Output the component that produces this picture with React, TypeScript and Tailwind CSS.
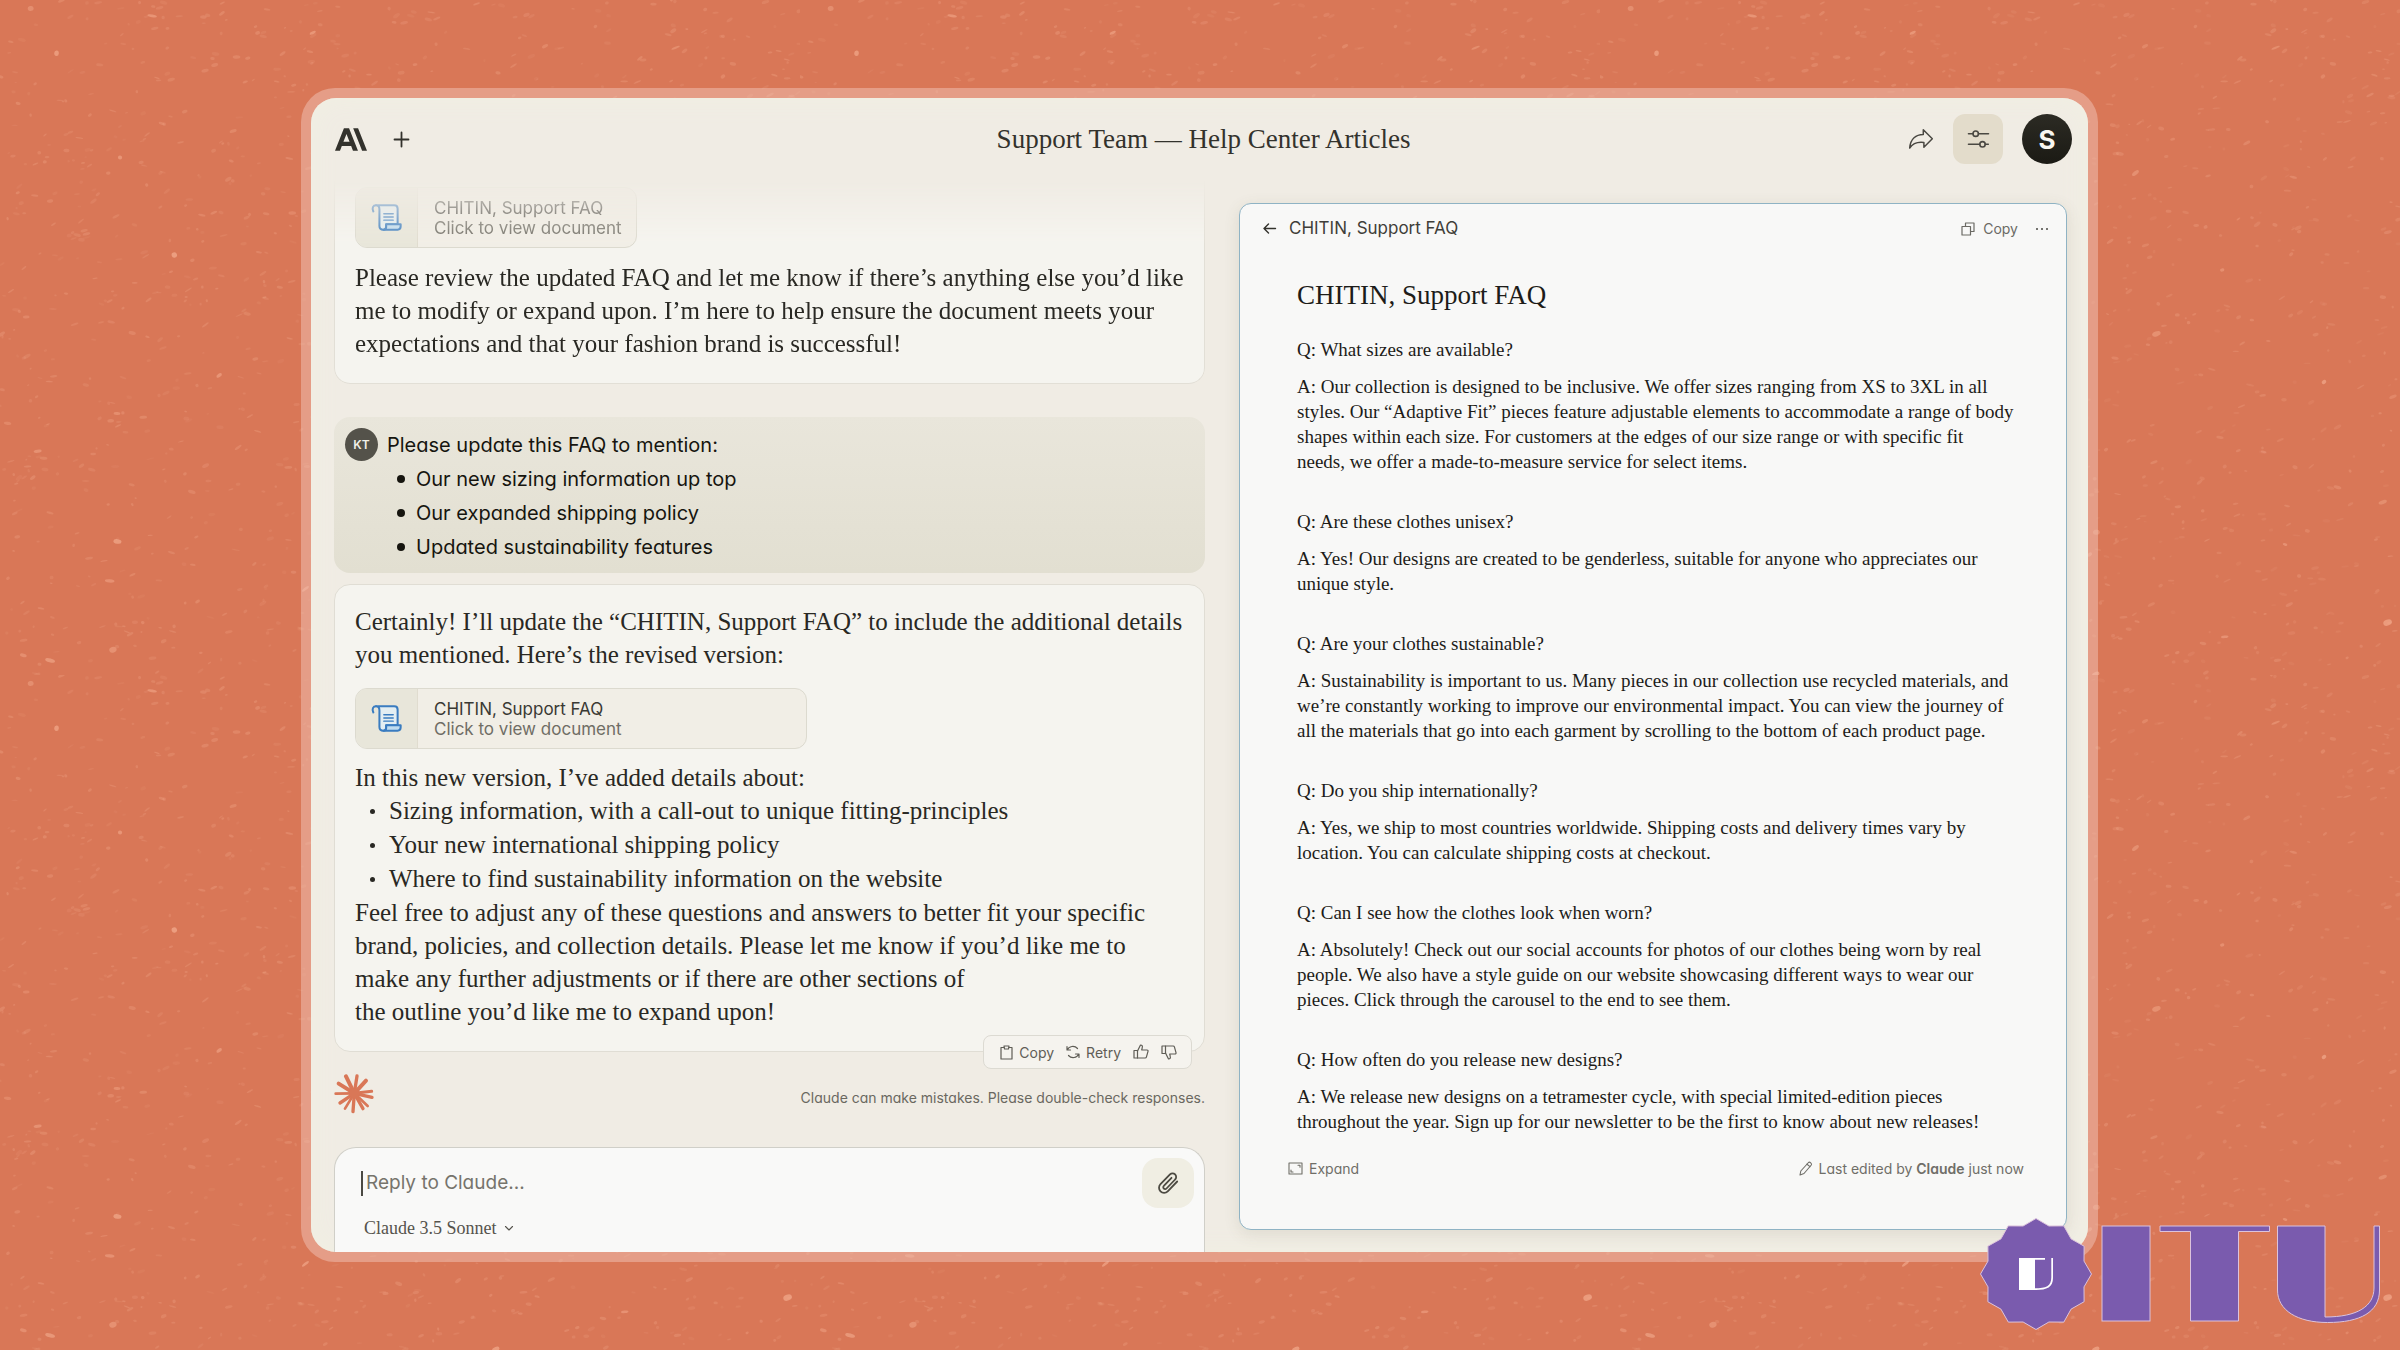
import type { ReactNode } from "react";

const SANS = "font-[Inter,sans-serif] [font-feature-settings:'cv11']";
const SERIF = "font-['Liberation_Serif',serif]";

/* ---------- backdrop ---------- */

function seeded(seed: number) {
  let s = seed;
  return () => {
    s = (s * 1103515245 + 12345) % 2147483648;
    return s / 2147483648;
  };
}

const rand = seeded(42);
const SPECKS = Array.from({ length: 1300 }, () => {
  const big = rand() > 0.965;
  return {
    x: rand() * 800,
    y: rand() * 675,
    rx: big ? 2 + rand() * 3 : 1 + rand() * 3,
    ry: big ? 1 + rand() * 2 : 0.6 + rand() * 1.2,
    o: big ? 0.4 + rand() * 0.35 : 0.08 + rand() * 0.24,
    a: -40 + rand() * 60,
  };
});

function Speckles() {
  return (
    <svg className="absolute inset-0 h-full w-full" aria-hidden="true">
      <defs>
        <pattern id="specks" width="800" height="675" patternUnits="userSpaceOnUse">
          {SPECKS.map((s, i) => (
            <ellipse
              key={i}
              cx={s.x}
              cy={s.y}
              rx={s.rx}
              ry={s.ry}
              fill="#f3ab8d"
              opacity={s.o}
              transform={`rotate(${s.a} ${s.x} ${s.y})`}
            />
          ))}
        </pattern>
      </defs>
      <rect width="100%" height="100%" fill="url(#specks)" />
    </svg>
  );
}

/* ---------- icons ---------- */

function Stroke({
  className,
  viewBox,
  width = 1,
  children,
}: {
  className: string;
  viewBox: string;
  width?: number;
  children: ReactNode;
}) {
  return (
    <svg
      className={`shrink-0 overflow-visible ${className}`}
      viewBox={viewBox}
      fill="none"
      stroke="currentColor"
      strokeWidth={width}
      strokeLinecap="round"
      strokeLinejoin="round"
      aria-hidden="true"
    >
      {children}
    </svg>
  );
}

const AnthropicMark = () => (
  <svg className="h-[23px] w-8" viewBox="0 3.54 24 16.92" fill="#33322c" role="img" aria-label="Anthropic">
    <path d="M17.304 3.541h-3.672l6.696 16.918H24Zm-10.608 0L0 20.459h3.744l1.37-3.553h7.005l1.369 3.553h3.744L10.536 3.541Zm-.371 10.223 2.291-5.946 2.292 5.946Z" />
  </svg>
);

const ShareIcon = () => (
  <Stroke className="h-5 w-6" viewBox="0 0 24 20" width={1.5}>
    <path d="M.7 19C1.5 10 7 5.6 14.3 5.5V.8l9 9-8.4 8.4v-4.8C8.800 12.600 4 14 .7 19Z" />
  </Stroke>
);

const SlidersIcon = () => (
  <Stroke className="h-4 w-[21px]" viewBox="0 0 21 16" width={1.6}>
    <path d="M.5 2.700h4.500M10.500 2.700h10M.5 13.300h11.300M17.300 13.300h3" />
    <circle cx="7.700" cy="2.700" r="2.700" />
    <circle cx="14.500" cy="13.300" r="2.700" />
  </Stroke>
);

const ScrollIcon = () => (
  <svg
    className="h-[27px] w-[29px] overflow-visible"
    viewBox="0 0 86 80"
    fill="none"
    stroke="#3a7cc0"
    strokeWidth="6"
    strokeLinecap="round"
    strokeLinejoin="round"
    aria-hidden="true"
  >
    <path d="M12 4H66q10 0 10 10V60H42v8q0 8-8 8-12 0-12-11V16Q22 4 12 4Z" fill="#e3eef2" />
    <path d="M4 22C-1 12 3 4 12 4" />
    <path d="M34 76q8 0 8-8v-8H85v6q0 10-9 10Z" fill="#bfdcf0" />
    <path d="M35 29H63M35 38.500H63M35 48H63" strokeWidth="4" />
  </svg>
);

const CopySquares = () => (
  <Stroke className="h-[14px] w-[14px]" viewBox="0 0 14 14" width={1.2}>
    <path d="M4.500 4V1h8.500v8.500h-3" />
    <path d="M1 4.500h8.500V13H1Z" />
  </Stroke>
);

const BackArrow = () => (
  <Stroke className="h-[11px] w-[13px]" viewBox="0 0 13 11" width={1.4}>
    <path d="M12.500 5.500H1M5.500 1 1 5.500 5.500 10" />
  </Stroke>
);

const Clipboard = () => (
  <Stroke className="h-[15px] w-[13px]" viewBox="0 0 13 15" width={1.2}>
    <path d="M4 2.500H1V14h11V2.500H9" />
    <path d="M4 1h5l-.5 3h-4Z" />
  </Stroke>
);

const RetryIcon = () => (
  <Stroke className="h-[14px] w-[14px]" viewBox="0 0 14 14" width={1.2}>
    <path d="M1 1.500v3.500h3.500M1.200 5C3 1 8.500.200 11.500 3.500" />
    <path d="M13 12.500V9H9.500M12.800 9C11 13 5.500 13.800 2.500 10.500" />
  </Stroke>
);

const ThumbUp = ({ flip = false }: { flip?: boolean }) => (
  <Stroke className={flip ? "h-4 w-4 -scale-y-100" : "h-4 w-4"} viewBox="0 0 16 16" width={1.2}>
    <path d="M1 6.500h3.500V14H1Z" />
    <path d="M4.500 7 7.500 1c1.800 0 2.200 1.200 1.700 2.800L8.700 6H14c.8 0 1.200.6 1 1.300l-1.600 5.800c-.2.6-.6.9-1.200.9H4.500" />
  </Stroke>
);

const Paperclip = () => (
  <Stroke className="h-6 w-6 text-[#4c4a42]" viewBox="0 0 24 24" width={1.8}>
    <path d="m21.200 10.500-9.500 9.800a5 5 0 0 1-7.200 0 5 5 0 0 1 0-7.100L14 3.400a3.600 3.600 0 0 1 5.100 0 3.600 3.600 0 0 1 0 5.100l-8.600 9a1.900 1.900 0 0 1-2.700 0 1.900 1.900 0 0 1 0-2.700l7.700-8" />
  </Stroke>
);

const ExpandIcon = () => (
  <Stroke className="h-[13px] w-[15px]" viewBox="0 0 15 13" width={1.1}>
    <path d="M1 1h13v11H1Z" />
    <path d="M10 3.200H12v2M3 8V10h2" />
  </Stroke>
);

const PencilIcon = () => (
  <Stroke className="h-[15px] w-[14px]" viewBox="0 0 14 15" width={1.1}>
    <path d="m1 14 .8-4L9.500 1.500c1.200-1 3.800 1 2.800 2.500L5 12.500Z" />
    <path d="m8 3.200 3 2.400" />
  </Stroke>
);

const Chevron = () => (
  <Stroke className="h-[5px] w-2" viewBox="0 0 8 5" width={1.1}>
    <path d="m.5.5 3.500 3.500L7.500.5" />
  </Stroke>
);

const RAYS: [number, number, number][] = [
  [60, 35, 12],
  [93, 34, 10],
  [120, 48, 12],
  [137, 80, 9],
  [138, 98, 10],
  [125, 124, 8],
  [111, 132, 10],
  [81, 141, 10],
  [57, 132, 8],
  [42, 115, 10],
  [29, 87, 8],
  [38, 57, 12],
];

const ClaudeSpark = () => (
  <svg className="h-10 w-10" viewBox="24 28 120 120" stroke="#d97757" strokeLinecap="round" role="img" aria-label="Claude">
    {RAYS.map(([x, y, w], i) => (
      <line key={i} x1="85" y1="86" x2={x} y2={y} strokeWidth={w} />
    ))}
    <circle cx="85" cy="86" r="16" fill="#d97757" stroke="none" />
  </svg>
);

const STAR = Array.from({ length: 24 }, (_, i) => {
  const r = i % 2 === 0 ? 55.5 : 49.7;
  const t = (i * Math.PI) / 12;
  return `${(76 + r * Math.sin(t)).toFixed(1)},${(74 - r * Math.cos(t)).toFixed(1)}`;
}).join(" ");

const ItuLogo = () => (
  <svg className="absolute right-0 bottom-0 h-[150px] w-[440px]" viewBox="0 0 440 150" role="img" aria-label="ITU">
    <g fill="#7a5bae" stroke="#dcc3dc" strokeWidth="1">
      <polygon points={STAR} />
      <rect x="142" y="26" width="48" height="95" />
      <path d="M200 26h109.500v5.500H278.500V121h-48V31.500H200Z" />
      <path d="M317.500 26H365v91c33 0 49-11 49-29V26h5.500v64c0 22-19 32.500-52 32.500-30 0-50-12-50-32.500Z" />
    </g>
    <path
      d="M59 58h26v1.800H75V88.300c11 0 16.300-2 16.300-11V58H93v20c0 9-6 12-17 12H59Z"
      fill="#fff"
    />
  </svg>
);

/* ---------- chat ---------- */

function DocumentChip({ wide = false }: { wide?: boolean }) {
  return (
    <button
      type="button"
      className={`flex h-[61px] items-stretch overflow-hidden rounded-xl border border-[#dcdacf] bg-[#f1eee6] text-left ${SANS} ${
        wide ? "w-[452px]" : "w-[282px]"
      }`}
    >
      <span className="flex w-[62px] shrink-0 items-center justify-center border-r border-[#e0dccf] bg-[#e8e6da]">
        <ScrollIcon />
      </span>
      <span className="flex flex-col justify-center pl-4 text-[17px] leading-5">
        <span className="text-[#3a3934]">CHITIN, Support FAQ</span>
        <span className="text-[#6f6d65]">Click to view document</span>
      </span>
    </button>
  );
}

function UserMessage() {
  const items = ["Our new sizing information up top", "Our expanded shipping policy", "Updated sustainability features"];
  return (
    <section
      className={`mt-[33px] flex items-start gap-[9px] rounded-2xl bg-linear-to-b from-[#e9e6db] to-[#e2dfd1] pt-[11px] pb-[9px] pl-[11px] text-[20px] leading-[34px] text-[#16150f] ${SANS}`}
    >
      <span className="flex size-[33px] shrink-0 items-center justify-center rounded-full bg-[#54524a] text-[12px] font-semibold text-[#f2f0e8]">
        KT
      </span>
      <div>
        <p>Please update this FAQ to mention:</p>
        <ul className="pl-[10px]">
          {items.map((t) => (
            <li key={t} className="flex items-center gap-[11px]">
              <span className="size-2 rounded-full bg-[#16150f]" />
              {t}
            </li>
          ))}
        </ul>
      </div>
    </section>
  );
}

function ReplyToolbar() {
  return (
    <div
      className={`absolute right-3 -bottom-[18px] flex h-[34px] items-center rounded-lg border border-[#dcdad2] bg-[#f5f3ee] pr-3.5 pl-4 text-[14px] text-[#5f5d56] ${SANS}`}
    >
      <button type="button" className="flex items-center gap-1.5">
        <Clipboard />
        Copy
      </button>
      <button type="button" className="ml-3 flex items-center gap-1.5">
        <RetryIcon />
        Retry
      </button>
      <button type="button" className="ml-3" aria-label="Good response">
        <ThumbUp />
      </button>
      <button type="button" className="ml-3" aria-label="Bad response">
        <ThumbUp flip />
      </button>
    </div>
  );
}

function Chat() {
  const added = [
    "Sizing information, with a call-out to unique fitting-principles",
    "Your new international shipping policy",
    "Where to find sustainability information on the website",
  ];
  return (
    <div className="flex min-h-0 min-w-0 flex-col overflow-hidden whitespace-nowrap">
      <section
        className={`rounded-b-2xl border border-t-0 border-[#e2dfd6] bg-[#f5f4ef] mask-[linear-gradient(to_bottom,transparent,black_64px)] px-5 pt-[7px] pb-[23px] text-[25px] leading-[33px] text-[#292823] ${SERIF}`}
      >
        <DocumentChip />
        <p className="mt-[13px]">
          Please review the updated FAQ and let me know if there’s anything else you’d like
          <br />
          me to modify or expand upon. I’m here to help ensure the document meets your
          <br />
          expectations and that your fashion brand is successful!
        </p>
      </section>

      <UserMessage />

      <section
        className={`relative mt-[11px] rounded-2xl border border-[#e0ddd4] bg-[#f5f4ef] px-5 pt-5 pb-[23px] text-[25px] leading-[33px] text-[#292823] ${SERIF}`}
      >
        <p>
          Certainly! I’ll update the “CHITIN, Support FAQ” to include the additional details
          <br />
          you mentioned. Here’s the revised version:
        </p>
        <div className="mt-[17px] mb-3">
          <DocumentChip wide />
        </div>
        <p>In this new version, I’ve added details about:</p>
        <ul className="pl-[15px] leading-[34px]">
          {added.map((t) => (
            <li key={t} className="flex items-center gap-[14px]">
              <span className="size-[5px] rounded-full bg-[#292823]" />
              {t}
            </li>
          ))}
        </ul>
        <p>
          Feel free to adjust any of these questions and answers to better fit your specific
          <br />
          brand, policies, and collection details. Please let me know if you’d like me to
          <br />
          make any further adjustments or if there are other sections of
          <br />
          the outline you’d like me to expand upon!
        </p>
        <ReplyToolbar />
      </section>

      <div className="mt-[22px] flex items-center justify-between">
        <ClaudeSpark />
        <p className={`pt-2 text-[14px] leading-5 text-[#6a6860] ${SANS}`}>
          Claude can make mistakes. Please double-check responses.
        </p>
      </div>

      <form
        className="mt-[33px] flex-1 shrink-0 rounded-t-[22px] border border-b-0 border-[#d0cfc8] bg-[#f9f9f8] pt-2.5 pr-2.5 pl-[26px]"
        onSubmit={(e) => e.preventDefault()}
      >
        <div className="flex items-center">
          <span className="h-[25px] w-0.5 bg-[#4a4943]" />
          <input
            type="text"
            aria-label="Reply to Claude"
            placeholder="Reply to Claude..."
            className={`min-w-0 flex-1 bg-transparent pl-[3px] text-[19px] leading-7 outline-none placeholder:text-[#76746c] ${SANS}`}
          />
          <button
            type="button"
            aria-label="Attach file"
            className="flex h-[50px] w-[52px] items-center justify-center rounded-2xl bg-[#f0eee3]"
          >
            <Paperclip />
          </button>
        </div>
        <label className="mt-2 flex w-fit items-center gap-2 pl-[3px] text-[#55534c]">
          <select
            aria-label="Model"
            defaultValue="sonnet"
            className={`h-6 appearance-none bg-transparent text-[18px] leading-6 outline-none ${SERIF}`}
          >
            <option value="sonnet">Claude 3.5 Sonnet</option>
          </select>
          <Chevron />
        </label>
      </form>
    </div>
  );
}

/* ---------- document ---------- */

const FAQ: { q: string; a: string[] }[] = [
  {
    q: "What sizes are available?",
    a: [
      "Our collection is designed to be inclusive. We offer sizes ranging from XS to 3XL in all",
      "styles. Our “Adaptive Fit” pieces feature adjustable elements to accommodate a range of body",
      "shapes within each size. For customers at the edges of our size range or with specific fit",
      "needs, we offer a made-to-measure service for select items.",
    ],
  },
  {
    q: "Are these clothes unisex?",
    a: [
      "Yes! Our designs are created to be genderless, suitable for anyone who appreciates our",
      "unique style.",
    ],
  },
  {
    q: "Are your clothes sustainable?",
    a: [
      "Sustainability is important to us. Many pieces in our collection use recycled materials, and",
      "we’re constantly working to improve our environmental impact. You can view the journey of",
      "all the materials that go into each garment by scrolling to the bottom of each product page.",
    ],
  },
  {
    q: "Do you ship internationally?",
    a: [
      "Yes, we ship to most countries worldwide. Shipping costs and delivery times vary by",
      "location. You can calculate shipping costs at checkout.",
    ],
  },
  {
    q: "Can I see how the clothes look when worn?",
    a: [
      "Absolutely! Check out our social accounts for photos of our clothes being worn by real",
      "people. We also have a style guide on our website showcasing different ways to wear our",
      "pieces. Click through the carousel to the end to see them.",
    ],
  },
  {
    q: "How often do you release new designs?",
    a: [
      "We release new designs on a tetramester cycle, with special limited-edition pieces",
      "throughout the year. Sign up for our newsletter to be the first to know about new releases!",
    ],
  },
];

function DocumentPanel() {
  return (
    <aside className="mt-[23px] mb-[22px] flex min-h-0 min-w-0 flex-col rounded-xl border border-[#8fb3c4] bg-[#f8f8f7] whitespace-nowrap shadow-[0_4px_16px_rgba(90,90,60,0.12)]">
      <header className={`flex h-[49px] shrink-0 items-center pr-[18px] pl-[23px] text-[#6b6a64] ${SANS}`}>
        <button type="button" aria-label="Back" className="text-[#33322c]">
          <BackArrow />
        </button>
        <h2 className="ml-[13px] flex-1 text-[17px] text-[#3f3e39]">CHITIN, Support FAQ</h2>
        <button type="button" className="flex items-center gap-2 text-[14px]">
          <CopySquares />
          Copy
        </button>
        <button type="button" aria-label="More" className="ml-[18px] flex gap-[3px]">
          <span className="size-[2px] rounded-full bg-[#4a4943]" />
          <span className="size-[2px] rounded-full bg-[#4a4943]" />
          <span className="size-[2px] rounded-full bg-[#4a4943]" />
        </button>
      </header>

      <article className={`shrink-0 px-[57px] pt-6 text-[19px] leading-[25px] text-[#1d1c19] ${SERIF}`}>
        <h1 className="mb-6 text-[27px] leading-9">CHITIN, Support FAQ</h1>
        <dl className="flex flex-col gap-[35px]">
          {FAQ.map(({ q, a }) => (
            <div key={q}>
              <dt>Q: {q}</dt>
              <dd className="mt-3">
                A:{" "}
                {a.map((line, i) => (
                  <span key={line}>
                    {i > 0 && <br />}
                    {line}
                  </span>
                ))}
              </dd>
            </div>
          ))}
        </dl>
      </article>

      <footer className={`mt-auto mb-[49px] flex h-6 shrink-0 items-center justify-between pr-[42px] pl-12 text-[14px] text-[#6f6e68] ${SANS}`}>
        <button type="button" className="flex items-center gap-1.5">
          <ExpandIcon />
          Expand
        </button>
        <p className="flex items-center gap-1.5">
          <PencilIcon />
          <span>
            Last edited by <strong className="font-semibold">Claude</strong> just now
          </span>
        </p>
      </footer>
    </aside>
  );
}

/* ---------- page ---------- */

function TopBar() {
  return (
    <header className="grid h-[82px] shrink-0 grid-cols-[1fr_auto_1fr] items-center pr-4 pl-6">
      <div className="flex items-center gap-[27px]">
        <AnthropicMark />
        <button type="button" aria-label="New chat" className="text-[#33322c]">
          <Stroke className="size-[15px]" viewBox="0 0 15 15" width={1.8}>
            <path d="M7.500.5v14M.5 7.500h14" />
          </Stroke>
        </button>
      </div>
      <h1 className={`text-[27px] leading-8 text-[#33322c] ${SERIF}`}>Support Team — Help Center Articles</h1>
      <div className="flex items-center justify-end text-[#4a4842]">
        <button type="button" aria-label="Share">
          <ShareIcon />
        </button>
        <button
          type="button"
          aria-label="Settings"
          className="ml-5 flex size-[50px] items-center justify-center rounded-xl bg-[#e3dccb]"
        >
          <SlidersIcon />
        </button>
        <button
          type="button"
          className={`ml-[19px] flex size-[50px] items-center justify-center rounded-full bg-linear-to-b from-[#2c2b24] to-[#1b1a14] text-[26px] font-bold text-[#f8f6f0] ${SANS}`}
        >
          S
        </button>
      </div>
    </header>
  );
}

export default function App() {
  return (
    <main className="relative h-screen overflow-hidden bg-[#d97757] py-[88px] pr-[302px] pl-[301px]">
      <Speckles />
      <div className="relative h-full rounded-[34px] bg-[#efbdae]/55 p-2.5">
        <div className="flex h-full flex-col overflow-hidden rounded-[25px] bg-[#f0ece4] shadow-[inset_0_0_28px_#f1f0e2]">
          <TopBar />
          <div className="grid min-h-0 flex-1 grid-cols-[871fr_828fr] gap-x-[34px] pr-[21px] pl-[23px]">
            <Chat />
            <DocumentPanel />
          </div>
        </div>
      </div>
      <ItuLogo />
    </main>
  );
}
